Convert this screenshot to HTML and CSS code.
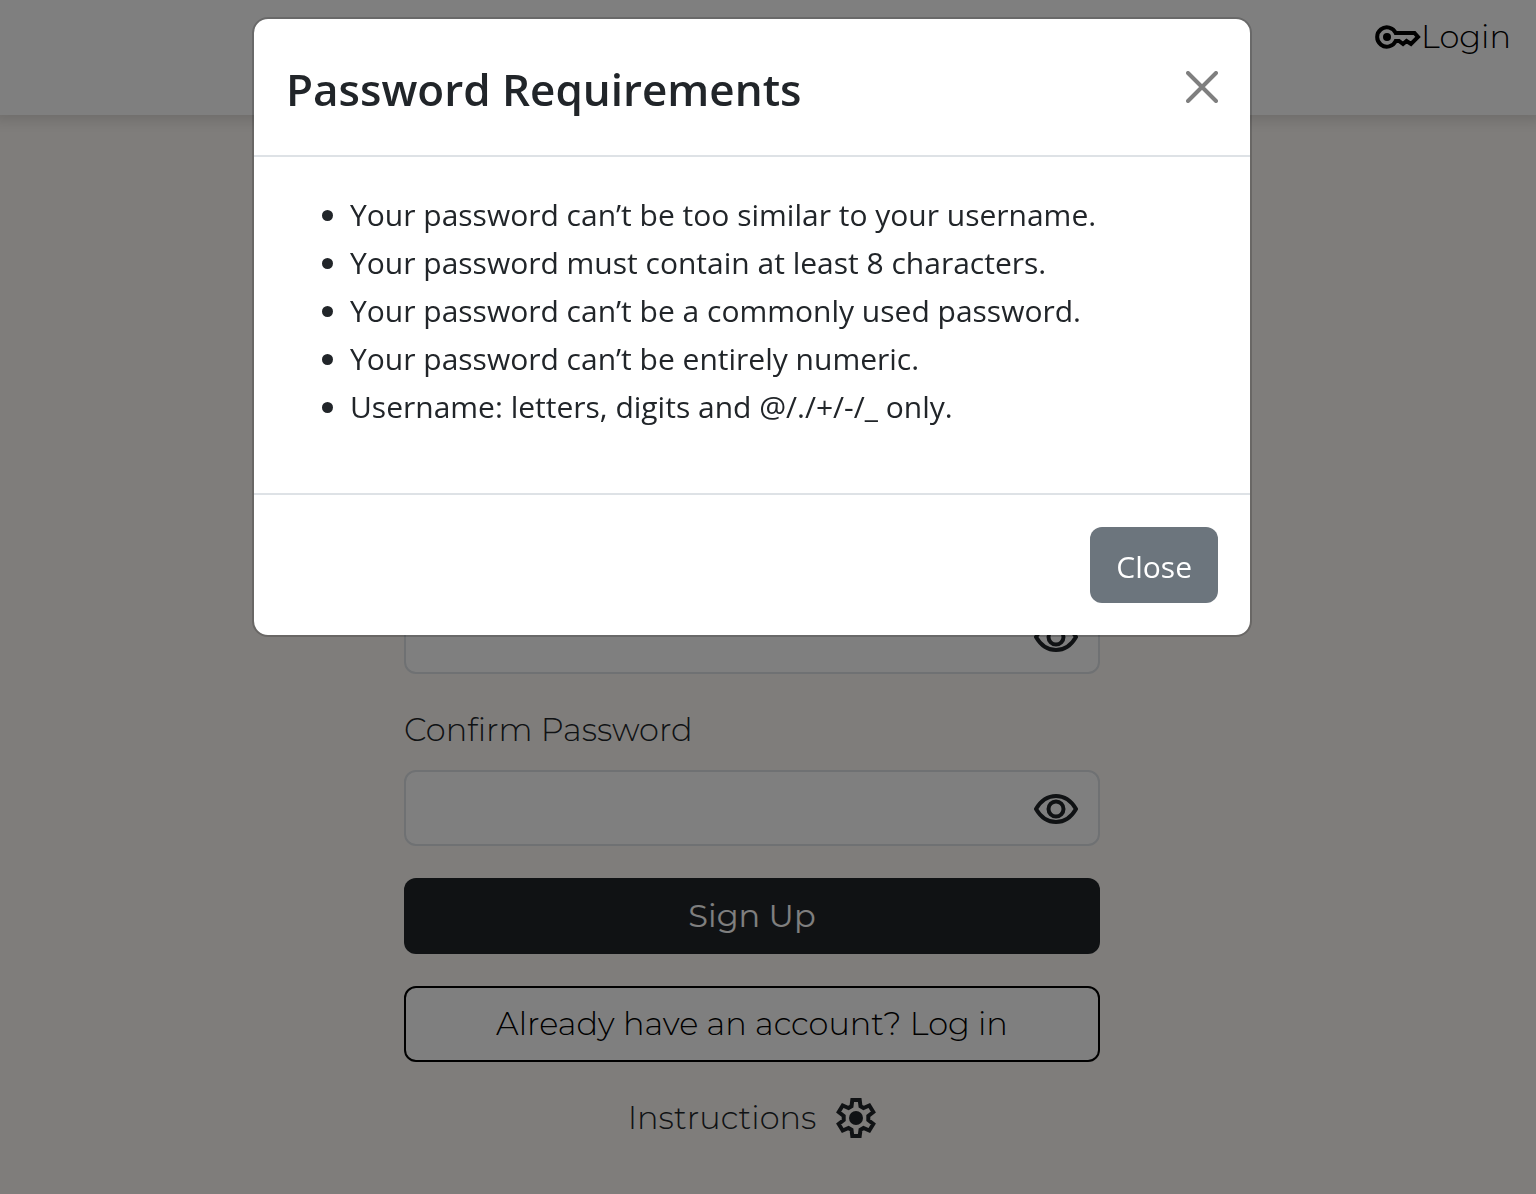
FILE: index.html
```html
<!DOCTYPE html>
<html lang="en">
<head>
<meta charset="utf-8">
<title>Sign Up</title>
<link rel="stylesheet" href="styles.css">
</head>
<body>
<header class="navbar">
  <a class="nav-link" href="#login">
    <svg class="key-icon" viewBox="0 0 46 24" aria-hidden="true">
      <path d="M20.700 8A9.700 9.700 0 1 0 20.700 16H24L28 19L31.500 16L36 19L43 12L39.500 8Z" fill="none" stroke="currentColor" stroke-width="4"/>
      <circle cx="12" cy="12" r="4"/>
    </svg>
    <span>Login</span>
  </a>
</header>
<main class="page">
  <form class="signup">
    <div class="field">
      <label for="password">Password</label>
      <div class="control">
        <input id="password" type="password">
        <button class="reveal" type="button" aria-label="Show password">
          <svg viewBox="0 0 44 30" aria-hidden="true"><path d="M2 15Q9.500 2 22 2T42 15Q34.500 28 22 28T2 15Z"/><circle cx="22" cy="15" r="7.500"/></svg>
        </button>
      </div>
    </div>
    <div class="field">
      <label for="confirm">Confirm Password</label>
      <div class="control">
        <input id="confirm" type="password">
        <button class="reveal" type="button" aria-label="Show confirmed password">
          <svg viewBox="0 0 44 30" aria-hidden="true"><path d="M2 15Q9.500 2 22 2T42 15Q34.500 28 22 28T2 15Z"/><circle cx="22" cy="15" r="7.500"/></svg>
        </button>
      </div>
    </div>
    <button class="btn btn-dark" type="submit">Sign Up</button>
    <a class="btn btn-outline" href="#login">Already have an account? Log in</a>
    <button class="instructions" type="button">
      <span>Instructions</span>
      <svg viewBox="0 0 40 40" aria-hidden="true"><path d="M16.300 2H23.700L24.500 8.200L27.500 10L33.300 7.500L37.300 14L32.300 18V22L37.300 26L33.300 32.500L27.500 30L24.500 31.800L23.700 38H16.300L15.500 31.800L12.500 30L6.700 32.500L2.700 26L7.700 22V18L2.700 14L6.700 7.500L12.500 10L15.500 8.200Z" fill="none" stroke="currentColor" stroke-width="4"/><circle cx="20" cy="20" r="7"/></svg>
    </button>
  </form>
</main>
<div class="backdrop">
  <section class="modal" role="dialog" aria-modal="true" aria-labelledby="modal-title">
    <div class="modal-header">
      <h1 id="modal-title">Password Requirements</h1>
      <button class="dismiss" type="button" aria-label="Close">
        <svg viewBox="0 0 32 32" aria-hidden="true"><path d="M2 2L30 30M30 2L2 30"/></svg>
      </button>
    </div>
    <div class="modal-body">
      <ul>
        <li>Your password can’t be too similar to your username.</li>
        <li>Your password must contain at least 8 characters.</li>
        <li>Your password can’t be a commonly used password.</li>
        <li>Your password can’t be entirely numeric.</li>
        <li>Username: letters, digits and @/./+/-/_ only.</li>
      </ul>
    </div>
    <div class="modal-footer">
      <button class="btn btn-secondary" type="button">Close</button>
    </div>
  </section>
</div>
</body>
</html>
```
FILE: styles.css
```css
* { box-sizing: border-box; }

body {
  margin: 0;
  background: #fefaf6;
  color: #212529;
  font: 300 32px/48px Montserrat, Inter, "Liberation Sans", sans-serif;
}

button, input { font: inherit; color: inherit; }
button { cursor: pointer; }
svg { display: block; fill: currentColor; }

.navbar {
  display: flex;
  justify-content: flex-end;
  height: 115px;
  padding: 13px 25px;
  background: #fff;
  box-shadow: 0 0 12px 6px rgba(0, 0, 0, 0.12);
}

.nav-link {
  display: flex;
  align-items: center;
  height: 48px;
  color: #000;
  text-decoration: none;
}
.key-icon { width: 46px; height: 24px; }

/* The right padding stands in for the scrollbar while the modal is open. */
.page { padding: 419px 32px 50px 0; }

.signup {
  display: flex;
  flex-direction: column;
  gap: 32px;
  max-width: 696px;
  margin: 0 auto;
}

.field { display: flex; flex-direction: column; gap: 16px; }

.control {
  display: flex;
  align-items: center;
  height: 76px;
  border: 2px solid #dee2e6;
  border-radius: 12px;
  background: #fff;
}
.control input {
  flex: 1;
  min-width: 0;
  padding: 12px 24px;
  border: 0;
  background: none;
  outline: 0;
}

.reveal { padding: 2px 20px 0; border: 0; background: none; }
.reveal svg {
  width: 44px;
  height: 30px;
  fill: none;
  stroke: currentColor;
  stroke-width: 4;
}

.btn {
  padding: 12px 24px;
  border: 2px solid transparent;
  border-radius: 12px;
  text-align: center;
  text-decoration: none;
}
.btn-dark { background: #212529; color: #fff; font-weight: 400; }
.btn-outline { border-color: #000; background: #fff; color: #000; }

.instructions {
  display: flex;
  align-items: center;
  justify-content: center;
  gap: 20px;
  padding: 0;
  border: 0;
  background: none;
}
.instructions svg { width: 40px; height: 40px; }

.backdrop {
  position: fixed;
  inset: 0;
  padding: 17px 32px 17px 0;
  background: rgba(0, 0, 0, 0.5);
  font-family: "Segoe UI", "Open Sans", "Noto Sans", sans-serif;
  font-weight: 400;
}

.modal {
  max-width: 1000px;
  margin: 0 auto;
  border: 2px solid rgba(0, 0, 0, 0.175);
  border-radius: 16px;
  background: #fff;
  background-clip: padding-box;
}

.modal-header {
  display: flex;
  align-items: center;
  justify-content: space-between;
  padding: 32px;
  border-bottom: 2px solid #dee2e6;
}
.modal-header h1 {
  margin: 0;
  padding-top: 4px;
  font-size: 44px;
  line-height: 68px;
  font-weight: 600;
}

.dismiss { padding: 0; border: 0; background: none; color: #7f7f7f; }
.dismiss svg {
  width: 32px;
  height: 32px;
  stroke: currentColor;
  stroke-width: 4;
  stroke-linecap: round;
}

.modal-body { padding: 34px 32px 30px; font-size: 30px; }
.modal-body ul { margin: 0 0 32px; padding-left: 64px; }

.modal-footer {
  display: flex;
  justify-content: flex-end;
  padding: 32px;
  border-top: 2px solid #dee2e6;
}
.btn-secondary { padding: 14px 24px 10px; background: #6c757d; color: #fff; font-size: 30px; }
```
